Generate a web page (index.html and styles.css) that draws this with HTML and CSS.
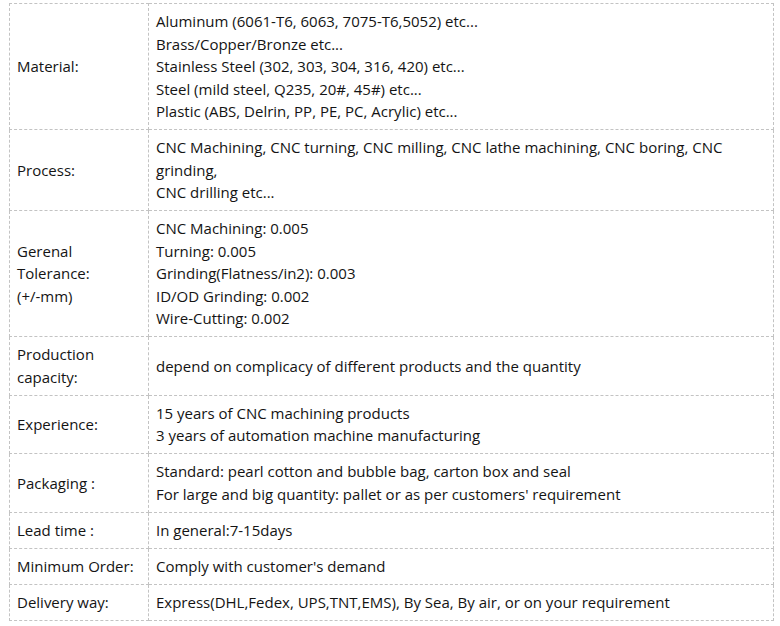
FILE: index.html
```html
<!DOCTYPE html>
<html>
<head>
<meta charset="utf-8">
<link rel="stylesheet" href="styles.css">
</head>
<body>
<table class="spec">
  <tbody>
    <tr>
      <td class="label">Material:</td>
      <td class="value">Aluminum (6061-T6, 6063, 7075-T6,5052) etc...<br>Brass/Copper/Bronze etc...<br>Stainless Steel (302, 303, 304, 316, 420) etc...<br>Steel (mild steel, Q235, 20#, 45#) etc...<br>Plastic (ABS, Delrin, PP, PE, PC, Acrylic) etc...</td>
    </tr>
    <tr>
      <td class="label">Process:</td>
      <td class="value">CNC Machining, CNC turning, CNC milling, CNC lathe machining, CNC boring, CNC grinding,<br>CNC drilling etc...</td>
    </tr>
    <tr>
      <td class="label">Gerenal<br>Tolerance:<br>(+/-mm)</td>
      <td class="value">CNC Machining: 0.005<br>Turning: 0.005<br>Grinding(Flatness/in2): 0.003<br>ID/OD Grinding: 0.002<br>Wire-Cutting: 0.002</td>
    </tr>
    <tr>
      <td class="label">Production capacity:</td>
      <td class="value">depend on complicacy of different products and the quantity</td>
    </tr>
    <tr>
      <td class="label">Experience:</td>
      <td class="value">15 years of CNC machining products<br>3 years of automation machine manufacturing</td>
    </tr>
    <tr>
      <td class="label">Packaging :</td>
      <td class="value">Standard: pearl cotton and bubble bag, carton box and seal<br>For large and big quantity: pallet or as per customers' requirement</td>
    </tr>
    <tr>
      <td class="label">Lead time :</td>
      <td class="value">In general:7-15days</td>
    </tr>
    <tr>
      <td class="label">Minimum Order:</td>
      <td class="value">Comply with customer's demand</td>
    </tr>
    <tr>
      <td class="label">Delivery way:</td>
      <td class="value">Express(DHL,Fedex, UPS,TNT,EMS), By Sea, By air, or on your requirement</td>
    </tr>
  </tbody>
</table>
</body>
</html>
```

FILE: styles.css
```css
html, body {
  margin: 0;
  padding: 0;
  background: #ffffff;
}

body {
  padding: 3px 6px 0 9px;
  font-family: "Open Sans", "Noto Sans", sans-serif;
  font-size: 15px;
  line-height: 22.5px;
  color: #141414;
}

.spec {
  width: 765px;
  border-collapse: collapse;
  table-layout: fixed;
}

.spec td {
  border: 1px dashed #c3c3c3;
  padding: 6.25px 7px;
  vertical-align: middle;
  text-align: left;
}

.spec .label {
  width: 139px;
  box-sizing: border-box;
}
```
